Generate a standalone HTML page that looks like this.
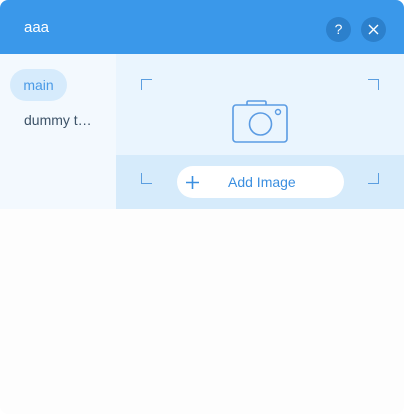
<!DOCTYPE html>
<html><head><style>
body{margin:0;width:404px;height:414px;background:#fff;font-family:"Liberation Sans",sans-serif;overflow:hidden}
.win{position:absolute;left:0;top:0;width:404px;height:414px;border-radius:8px;overflow:hidden;background:#fdfdfd}
.hd{position:absolute;left:0;top:0;width:404px;height:54px;background:#3a98ea}
.t{position:absolute;left:24px;top:19px;color:#fff;font-size:15px}
.b{position:absolute;top:17px;width:25px;height:25px;border-radius:50%;background:#2c80cc;color:#fff;text-align:center;line-height:25px;font-size:14px}
.sb{position:absolute;left:0;top:54px;width:116px;height:155px;background:#f3f9fe}
.pill{position:absolute;left:10px;top:69px;width:57px;height:32px;border-radius:16px;background:#d6ebfc;color:#4a9ae6;font-size:14px;line-height:32px;text-align:center}
.dm{position:absolute;left:24px;top:112px;color:#3d5368;font-size:14px}
.r1{position:absolute;left:116px;top:54px;width:288px;height:101px;background:#eaf5fe}
.r2{position:absolute;left:116px;top:155px;width:288px;height:54px;background:#d6ebfb}
.c{position:absolute;width:10px;height:10px;border-color:#5b9ee0;border-style:solid;border-width:0}
.add{position:absolute;left:177px;top:166px;width:167px;height:32px;border-radius:16px;background:#fff;color:#3b8fe0;font-size:14px;line-height:32px}
</style></head><body><div class="win">
<div class="hd"><div class="t">aaa</div>
<div class="b" style="left:326px">?</div>
<div class="b" style="left:361px"><svg width="25" height="25" viewBox="0 0 25 25"><path d="M8 8L17 17M17 8L8 17" stroke="#fff" stroke-width="1.4"/></svg></div></div>
<div class="sb"></div>
<div class="pill">main</div>
<div class="dm">dummy t…</div>
<div class="r1"></div><div class="r2"></div>
<div class="c" style="left:141px;top:79px;border-top-width:1px;border-left-width:1px"></div>
<div class="c" style="left:368px;top:79px;border-top-width:1px;border-right-width:1px"></div>
<div class="c" style="left:141px;top:173px;border-bottom-width:1px;border-left-width:1px"></div>
<div class="c" style="left:368px;top:173px;border-bottom-width:1px;border-right-width:1px"></div>
<svg style="position:absolute;left:232px;top:100px" width="56" height="43" viewBox="0 0 56 43">
<rect x="1" y="5" width="54" height="37" rx="3" fill="none" stroke="#5a9be3" stroke-width="1.6"/>
<path d="M15 5V2.5Q15 1 16.5 1H32.5Q34 1 34 2.5V5" fill="none" stroke="#5a9be3" stroke-width="1.6"/>
<circle cx="28.5" cy="24" r="11" fill="none" stroke="#5a9be3" stroke-width="1.6"/>
<circle cx="46" cy="12" r="2.5" fill="none" stroke="#5a9be3" stroke-width="1.4"/></svg>
<div class="add"><svg style="position:absolute;left:8px;top:9px" width="15" height="15"><path d="M7.5 1V14M1 7.5H14" stroke="#3b8fe0" stroke-width="1.6"/></svg><span style="position:absolute;left:51px">Add Image</span></div>
</div></body></html>
